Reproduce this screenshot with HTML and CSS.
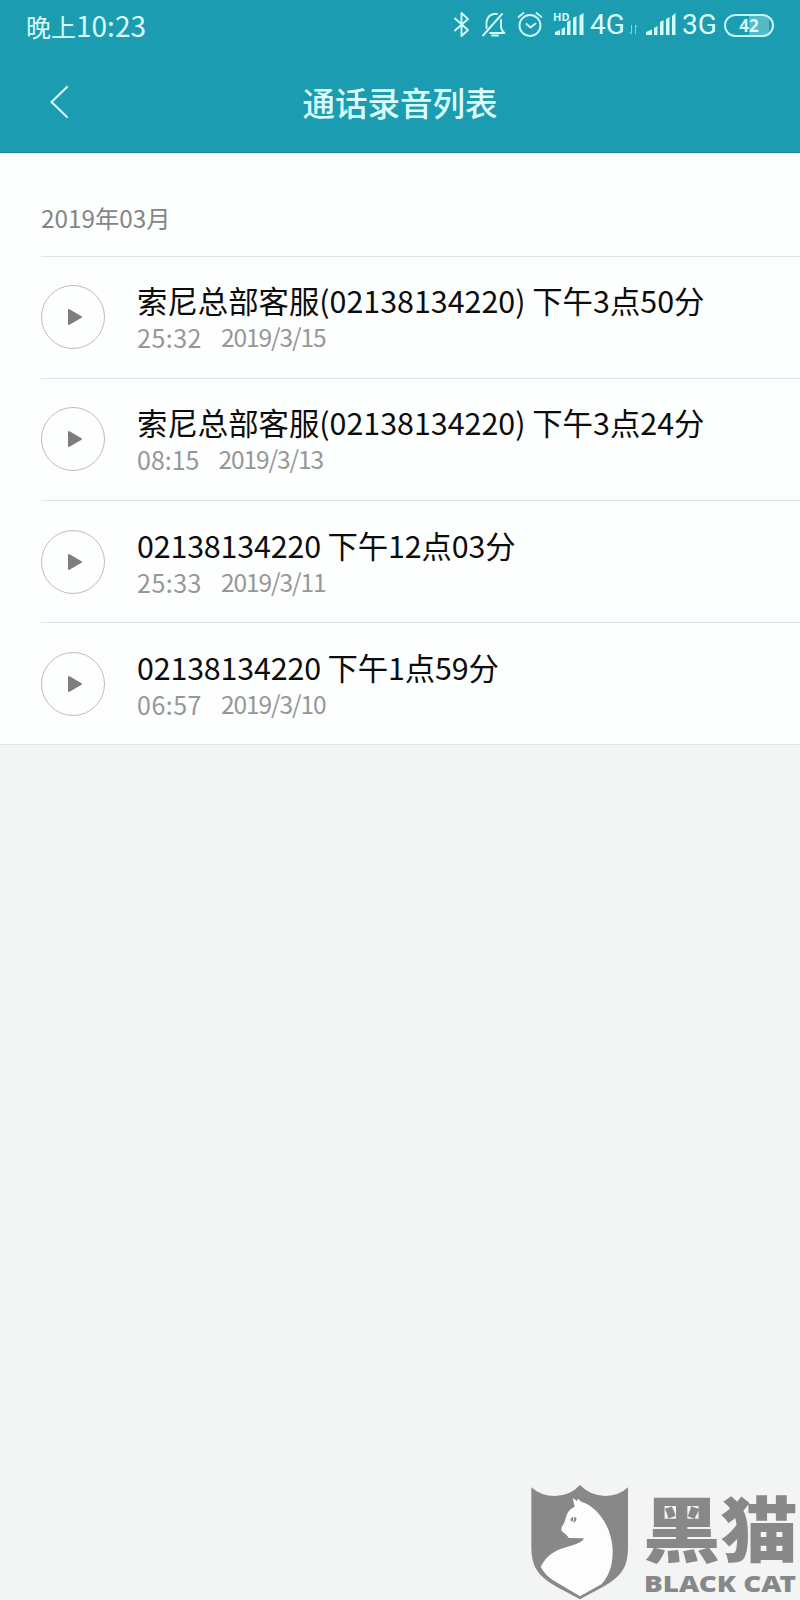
FILE: index.html
```
<!DOCTYPE html>
<html lang="zh-CN">
	<head>
		<meta charset="utf-8">
		<title>通话录音列表</title>
		<link rel="stylesheet" href="styles.css">
	</head>
	<body>
		<div class="page">
			<div class="header">
				<div class="status">
					<div class="time"><span class="timeText">晚上</span>10:23</div>
					<svg class="statusIcons" width="137" height="50" viewBox="0 0 137 50">
						<g fill="none" stroke="#d2fbfc" stroke-width="1.9" stroke-linecap="round" stroke-linejoin="round">
							<!-- 蓝牙 -->
							<path d="M3 18.500l13 11.500-6.500 6V13l6.500 6L3 30.500"/>
							<!-- 静音 -->
							<path d="M50 14L31 35.500M49 20v7q.5 4 3.500 6H38M34.500 28v-6q1-7 7.500-8h3"/>
							<path d="M40 35.500h6"/>
							<!-- 闹钟 -->
							<circle cx="78" cy="25.500" r="10.500"/>
							<path d="M74.500 24l4 3.500 5-4M66.500 17l5-4M89.500 17l-5-4"/>
						</g>
						<path fill="#d2fbfc" d="M103 35v-3l5-2v5zM109.500 35v-6l3.500-2v8zM115 35V22l3.500-2v15zM121 35V18l3.500-2v19zM127.500 35V15.500l4-2.500v22z"/>
						<text class="hd" x="101" y="20.500">HD</text>
					</svg>
					<span class="net net4">4G</span>
					<svg class="arrows" width="13" height="50" viewBox="0 0 13 50">
						<path d="M4.500 25v9l-2-2M8.500 34v-9l2 2" fill="none" stroke="#83d0d8" stroke-width="1"/>
					</svg>
					<svg class="signal" width="32" height="50" viewBox="0 0 32 50">
						<path fill="#d2fbfc" d="M0 35v-3l6-2.500V35zM8 35v-7l3.500-2v9zM14 35V22l3.500-2v15zM20 35V19l3.500-2v18zM26 35V16l3.500-3v22z"/>
					</svg>
					<span class="net net3">3G</span>
					<div class="battery"><span>42</span></div>
				</div>
				<div class="titleBar">
					<svg class="back" width="24" height="36" viewBox="0 0 24 36">
						<path d="M19 3L3.500 18 19 33" fill="none" stroke="#d2fbfc" stroke-width="2.200" stroke-linecap="round"/>
					</svg>
					<h1>通话录音列表</h1>
				</div>
			</div>

			<div class="records">
				<div class="month">2019年03月</div>
				<ul class="list">
					<li>
						<div class="play"><svg width="16" height="18" viewBox="0 0 16 18"><path d="M2 2v14l12-7z"/></svg></div>
						<div class="info">
							<p class="name">索尼总部客服(02138134220) 下午3点50分</p>
							<p class="detail"><span class="long">25:32</span><span class="date">2019/3/15</span></p>
						</div>
					</li>
					<li>
						<div class="play"><svg width="16" height="18" viewBox="0 0 16 18"><path d="M2 2v14l12-7z"/></svg></div>
						<div class="info">
							<p class="name">索尼总部客服(02138134220) 下午3点24分</p>
							<p class="detail"><span>08:15</span><span class="date">2019/3/13</span></p>
						</div>
					</li>
					<li>
						<div class="play"><svg width="16" height="18" viewBox="0 0 16 18"><path d="M2 2v14l12-7z"/></svg></div>
						<div class="info">
							<p class="name number">02138134220 下午12点03分</p>
							<p class="detail"><span class="long">25:33</span><span class="date">2019/3/11</span></p>
						</div>
					</li>
					<li>
						<div class="play"><svg width="16" height="18" viewBox="0 0 16 18"><path d="M2 2v14l12-7z"/></svg></div>
						<div class="info">
							<p class="name number">02138134220 下午1点59分</p>
							<p class="detail"><span class="long">06:57</span><span class="date">2019/3/10</span></p>
						</div>
					</li>
				</ul>
			</div>

			<div class="brand">
				<svg class="shield" width="98" height="116" viewBox="33 42 294 348">
					<path fill="#888" d="M34 52Q62 78 105 78 151 77 180 45 211 77 256 78 298 77 324 52V235C323 320 280 334 180 388 80 334 36 320 34 235z"/>
					<path fill="#fdfdfd" d="M164 110L158 84 171 93 174 86 184 95C240 112 278 182 278 245 278 290 265 320 244 343L180 379 108 336Q76 318 62 290C83 250 110 238 153 227Q188 218 192 205L147 204Q139 194 126 184C121 173 126 171 132 160 139 145 137 122 164 110z"/>
					<path fill="#888" d="M151 151Q153 141 160 141L158 156zM163 141l6 2q2 10-9 15z"/>
				</svg>
				<svg class="brandText" width="158" height="116" viewBox="0 0 158 116">
					<text class="brandCn" x="1" y="72" textLength="155" lengthAdjust="spacingAndGlyphs">黑猫</text>
					<text class="brandEn" x="2" y="108" textLength="152" lengthAdjust="spacingAndGlyphs">BLACK CAT</text>
				</svg>
			</div>
		</div>
	</body>
</html>
```
FILE: styles.css
```
*{
	padding: 0;
	margin: 0;
	box-sizing: border-box;
}
ul,li{
	list-style: none;
}
body{
	background-color: #f3f5f5;
	font-family: "Noto Sans CJK SC", sans-serif;
}
svg{
	display: block;
	flex-shrink: 0;
}
.page{
	display: flex;
	flex-direction: column;
	height: 1600px;
	overflow: hidden;
}
/* 顶部 */
.header{
	height: 153px;
	background-color: #1b9cb1;
	border-bottom: 1px solid #198b9d;
	color: #dcfdfd;
}
.status{
	display: flex;
	align-items: center;
	height: 50px;
	padding-left: 26px;
}
.time{
	width: 426px;
	font-size: 28px;
	line-height: 50px;
	white-space: nowrap;
}
.timeText{
	font-size: 25px;
}
.hd{
	font: bold 11px "Noto Sans", sans-serif;
	fill: #d2fbfc;
}
.net{
	font-family: Roboto, sans-serif;
	font-size: 28px;
	line-height: 52px;
}
.net4{
	width: 37px;
	margin-left: 1px;
}
.arrows{
	margin-left: 0;
}
.signal{
	margin-left: 6px;
}
.net3{
	width: 37px;
	margin-left: 4px;
}
.battery{
	width: 50px;
	height: 23px;
	margin-left: 5px;
	border: 2px solid #c5f4f7;
	border-radius: 12px;
	background: linear-gradient(90deg, #1b9cb1 50%, #55bac8 50%, #55bac8 94%, #1b9cb1 94%);
	text-align: center;
}
.battery span{
	display: block;
	font: bold 17px/19px "Noto Sans", sans-serif;
}
.titleBar{
	display: grid;
	grid-template-columns: 120px 1fr 120px;
	align-items: center;
	height: 103px;
}
.back{
	margin-left: 48px;
}
.titleBar h1{
	font-size: 32.5px;
	font-weight: 500;
	line-height: 50px;
	text-align: center;
}
/* 录音列表 */
.records{
	height: 592px;
	padding-left: 41px;
	background-color: #fdfefe;
	border-bottom: 1px solid #e4e6e6;
}
.month{
	height: 102.5px;
	padding-top: 47px;
	font-size: 24.3px;
	line-height: 36px;
	color: #858585;
}
.list li{
	display: flex;
	align-items: center;
	height: 122.3px;
	border-top: 1px solid #e2e4e4;
}
.play{
	display: flex;
	align-items: center;
	justify-content: center;
	width: 64px;
	height: 64px;
	padding-left: 4px;
	border: 1px solid #bdbdbd;
	border-radius: 50%;
}
.play path{
	fill: #7d7d7d;
	stroke: #7d7d7d;
	stroke-width: 2;
	stroke-linejoin: round;
}
.info{
	margin-left: 32px;
	white-space: nowrap;
}
.name{
	font-size: 30.4px;
	line-height: 40px;
	color: #0c0c0c;
}
.number{
	letter-spacing: -0.15px;
}
.detail{
	display: flex;
	gap: 19px;
	font-size: 25px;
	line-height: 34px;
	color: #979797;
}
.detail .long{
	letter-spacing: 0.5px;
}
.detail .date{
	font-size: 24.5px;
	letter-spacing: -1.1px;
}
/* 右下角标识 */
.brand{
	display: flex;
	gap: 13px;
	margin-top: auto;
	margin-left: 531px;
}
.brandText{
	fill: #888;
}
.brandCn{
	font-size: 71px;
	font-weight: 900;
}
.brandEn{
	font: 900 22px "Noto Sans", sans-serif;
}
```
